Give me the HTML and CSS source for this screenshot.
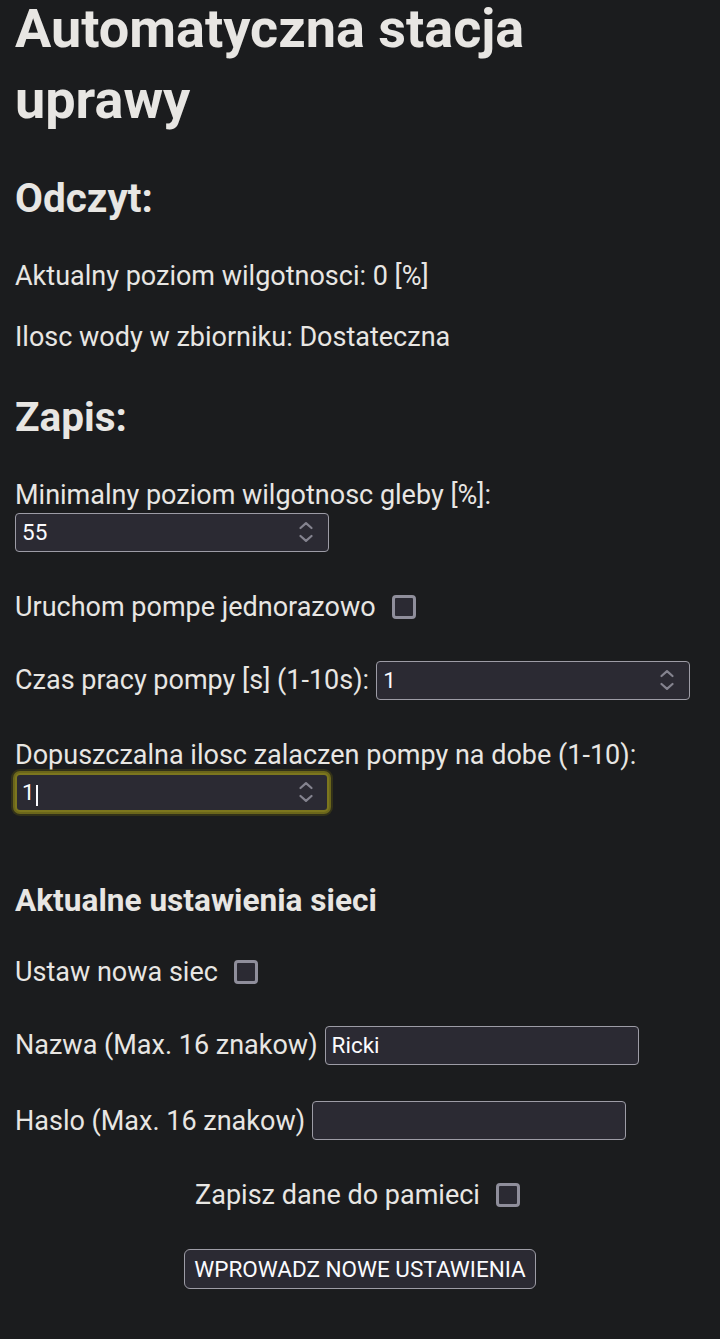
FILE: index.html
```html
<!DOCTYPE html>
<html lang="pl">
<head>
<meta charset="utf-8">
<title>Automatyczna stacja uprawy</title>
<link rel="stylesheet" href="styles.css">
</head>
<body>
<h1 class="title"><span class="title-line">Automatyczna stacja</span> <span class="title-line">uprawy</span></h1>

<h2 class="section section-first">Odczyt:</h2>
<p class="reading reading-first">Aktualny poziom wilgotnosci: 0 [%]</p>
<p class="reading">Ilosc wody w zbiorniku: Dostateczna</p>

<h2 class="section">Zapis:</h2>
<form class="settings">
  <div class="stack stack-first">
    <label class="text" for="minHum">Minimalny poziom wilgotnosc gleby [%]:</label>
    <div class="field">
      <input class="field-input" id="minHum" type="number" value="55">
      <svg class="spin" viewBox="0 0 14 20" width="14" height="20"><polyline points="1.5,6 7,1.2 12.5,6"/><polyline points="1.5,14 7,18.8 12.5,14"/></svg>
    </div>
  </div>

  <div class="row row-check">
    <label class="text" for="pumpOnce">Uruchom pompe jednorazowo</label>
    <input class="check" id="pumpOnce" type="checkbox">
  </div>

  <div class="row row-field">
    <label class="text" for="pumpTime">Czas pracy pompy [s] (1-10s):</label>
    <div class="field">
      <input class="field-input" id="pumpTime" type="number" value="1">
      <svg class="spin" viewBox="0 0 14 20" width="14" height="20"><polyline points="1.5,6 7,1.2 12.5,6"/><polyline points="1.5,14 7,18.8 12.5,14"/></svg>
    </div>
  </div>

  <div class="stack stack-focus">
    <label class="text" for="pumpCount">Dopuszczalna ilosc zalaczen pompy na dobe (1-10):</label>
    <div class="field field-focused">
      <input class="field-input field-fit" id="pumpCount" type="number" value="1">
      <span class="caret"></span>
      <span class="fill"></span>
      <svg class="spin" viewBox="0 0 14 20" width="14" height="20"><polyline points="1.5,6 7,1.2 12.5,6"/><polyline points="1.5,14 7,18.8 12.5,14"/></svg>
    </div>
  </div>

  <h3 class="subsection">Aktualne ustawienia sieci</h3>

  <div class="row row-check row-after-h3">
    <label class="text" for="newNet">Ustaw nowa siec</label>
    <input class="check" id="newNet" type="checkbox">
  </div>

  <div class="row row-field">
    <label class="text" for="ssid">Nazwa (Max. 16 znakow)</label>
    <div class="field">
      <input class="field-input" id="ssid" type="text" value="Ricki">
    </div>
  </div>

  <div class="row row-field">
    <label class="text" for="pass">Haslo (Max. 16 znakow)</label>
    <div class="field">
      <input class="field-input" id="pass" type="password" value="">
    </div>
  </div>

  <div class="row row-check row-center">
    <label class="text" for="save">Zapisz dane do pamieci</label>
    <input class="check check-end" id="save" type="checkbox">
  </div>

  <div class="actions">
    <button class="submit" type="button">WPROWADZ NOWE USTAWIENIA</button>
  </div>
</form>
</body>
</html>
```

FILE: styles.css
```css
html {
  background: #1b1c1e;
}

body {
  margin: 0;
  padding: 0 15px;
  background: #1b1c1e;
  color: #e8e6e3;
  font-family: Roboto, "Liberation Sans", sans-serif;
  font-size: 27px;
  line-height: 34.67px;
}

.title {
  display: flex;
  flex-direction: column;
  align-items: flex-start;
  gap: 14px;
  margin: 0;
  font-size: 54px;
  line-height: 57px;
  font-weight: 700;
}

.title-line {
  white-space: nowrap;
}

.section {
  margin: 35.4px 0 0;
  font-size: 40.5px;
  line-height: 52px;
  font-weight: 700;
}

.section-first {
  margin-top: 43.7px;
}

.reading {
  margin: 26.7px 0 0;
}

.reading-first {
  margin-top: 35.4px;
}

.settings {
  margin: 0;
}

.text {
  white-space: nowrap;
}

.stack {
  display: flex;
  flex-direction: column;
  align-items: flex-start;
}

.stack-first {
  margin-top: 35.4px;
}

.stack-focus {
  margin-top: 38.2px;
}

.row {
  display: flex;
  align-items: center;
  gap: 7px;
}

.row-check {
  margin-top: 38.1px;
  gap: 16px;
}

.row-field {
  margin-top: 36.5px;
}

.row-after-h3 {
  margin-top: 33px;
}

.row-center {
  justify-content: center;
  margin-top: 37.3px;
}

.field {
  box-sizing: border-box;
  display: flex;
  align-items: center;
  width: 314px;
  height: 39px;
  padding: 0 15.5px 0 5px;
  border: 1px solid #9d9ca6;
  border-radius: 4px;
  background: #2b2a33;
}

.field-input {
  flex: 1;
  min-width: 0;
  margin: 0;
  padding: 0 0 0 1px;
  border: 0;
  outline: none;
  background: transparent;
  color: #fbfbfe;
  font-family: Roboto, "Liberation Sans", sans-serif;
  font-size: 22.5px;
  line-height: 26px;
  -moz-appearance: textfield;
  appearance: textfield;
}

.field-input::-webkit-outer-spin-button,
.field-input::-webkit-inner-spin-button {
  -webkit-appearance: none;
  margin: 0;
}

.field-fit {
  flex: 0 0 13.5px;
  width: 13.5px;
}

.caret {
  width: 1.5px;
  height: 21px;
  margin-top: 6px;
  margin-left: 0.5px;
  background: #fbfbfe;
}

.fill {
  flex: 1;
}

.field-focused {
  border: 2px solid #7c761e;
  padding-left: 4px;
  padding-right: 14.5px;
  border-radius: 5px;
  box-shadow: 0 0 0 2px #6b661b, 0 0 0 4px rgba(70, 67, 22, 0.55);
}

.spin {
  flex: none;
  fill: none;
  stroke: #84838f;
  stroke-width: 2.2;
  stroke-linecap: round;
  stroke-linejoin: round;
}

.check {
  -webkit-appearance: none;
  appearance: none;
  box-sizing: border-box;
  flex: none;
  width: 24px;
  height: 24px;
  margin: 0;
  border: 3px solid #8f8e9b;
  border-radius: 4px;
  background: #2b2a33;
}

.check-end {
  margin-right: 5px;
}

.subsection {
  margin: 69.5px 0 0;
  font-size: 31.6px;
  line-height: 40.6px;
  font-weight: 700;
}

.actions {
  display: flex;
  justify-content: center;
  margin-top: 36.8px;
}

.submit {
  box-sizing: border-box;
  height: 39.3px;
  margin: 0;
  padding: 0 9.5px;
  border: 1px solid #9d9ca6;
  border-radius: 6px;
  background: #2b2a33;
  color: #fbfbfe;
  font-family: Roboto, "Liberation Sans", sans-serif;
  font-size: 22.5px;
  line-height: 26px;
}
```
